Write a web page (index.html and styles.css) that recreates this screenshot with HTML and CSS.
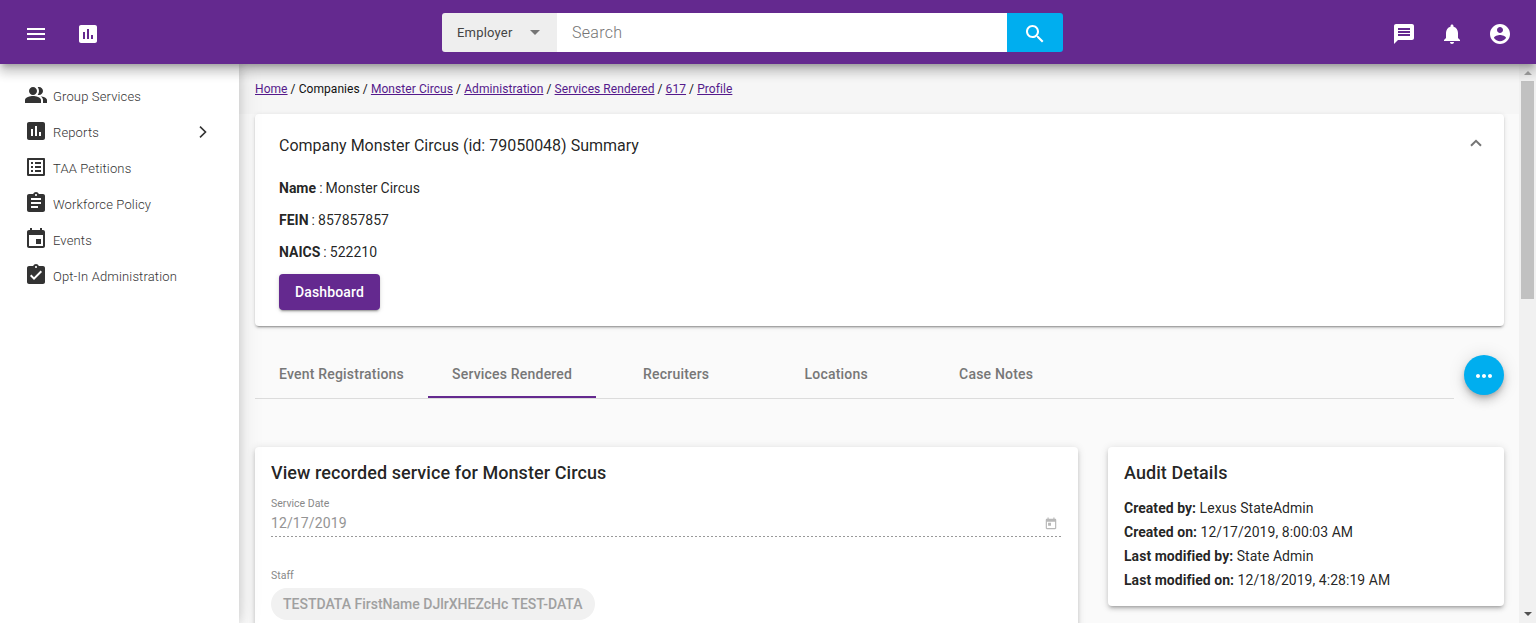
FILE: index.html
```html
<!DOCTYPE html>
<html lang="en">
<head>
<meta charset="utf-8">
<title>Services Rendered</title>
<link rel="stylesheet" href="styles.css">
</head>
<body>
<header class="topbar">
  <div class="topbar-side">
    <svg class="icon" viewBox="0 0 24 24"><path d="M3 18h18v-2H3v2zm0-5h18v-2H3v2zm0-7v2h18V6H3z"/></svg>
    <svg class="icon" viewBox="0 0 24 24"><path d="M19 3H5c-1.100 0-2 .9-2 2v14c0 1.100.9 2 2 2h14c1.100 0 2-.9 2-2V5c0-1.100-.9-2-2-2zM9 17H7v-7h2v7zm4 0h-2V7h2v10zm4 0h-2v-4h2v4z"/></svg>
  </div>
  <div class="search">
    <div class="search-type"><span>Employer</span><i class="caret"></i></div>
    <div class="search-input">Search</div>
    <div class="search-button"><svg class="icon" viewBox="0 0 24 24"><path d="M15.500 14h-.79l-.28-.27C15.410 12.590 16 11.110 16 9.500 16 5.910 13.090 3 9.500 3S3 5.910 3 9.500 5.910 16 9.500 16c1.610 0 3.090-.59 4.230-1.570l.27.28v.79l5 4.990L20.490 19l-4.990-5zm-6 0C7.010 14 5 11.990 5 9.500S7.010 5 9.500 5 14 7.010 14 9.500 11.990 14 9.500 14z"/></svg></div>
  </div>
  <div class="topbar-side topbar-right">
    <svg class="icon" viewBox="0 0 24 24"><path d="M20 2H4c-1.100 0-1.990.9-1.990 2L2 22l4-4h14c1.100 0 2-.9 2-2V4c0-1.100-.9-2-2-2zM6 9h12v2H6V9zm12 5H6v-2h12v2zm0-6H6V6h12v2z"/></svg>
    <svg class="icon" viewBox="0 0 24 24"><path d="M12 22c1.100 0 2-.9 2-2h-4c0 1.100.89 2 2 2zm6-6v-5c0-3.070-1.640-5.640-4.500-6.320V4c0-.83-.67-1.500-1.500-1.500s-1.500.67-1.500 1.500v.68C7.630 5.360 6 7.920 6 11v5l-2 2v1h16v-1l-2-2z"/></svg>
    <svg class="icon" viewBox="0 0 24 24"><path d="M12 2C6.480 2 2 6.480 2 12s4.480 10 10 10 10-4.480 10-10S17.520 2 12 2zm0 3c1.660 0 3 1.340 3 3s-1.340 3-3 3-3-1.340-3-3 1.340-3 3-3zm0 14.200c-2.500 0-4.710-1.280-6-3.220.03-1.990 4-3.080 6-3.080 1.990 0 5.970 1.090 6 3.080-1.290 1.940-3.500 3.220-6 3.220z"/></svg>
  </div>
</header>
<div class="shell">
  <nav class="sidebar">
    <a class="nav-item"><svg class="icon" viewBox="0 0 24 24"><path d="M16.670 13.130C18.040 14.060 19 15.320 19 17v3h4v-3c0-2.180-3.570-3.470-6.330-3.870zM15 12c2.210 0 4-1.790 4-4s-1.790-4-4-4c-.47 0-.91.1-1.330.24C14.500 5.270 15 6.580 15 8s-.5 2.730-1.330 3.760c.42.14.86.24 1.330.24zM9 12c2.210 0 4-1.790 4-4s-1.790-4-4-4-4 1.790-4 4 1.790 4 4 4zm0 1c-2.670 0-8 1.340-8 4v3h16v-3c0-2.660-5.330-4-8-4z"/></svg><span>Group Services</span></a>
    <a class="nav-item"><svg class="icon" viewBox="0 0 24 24"><path d="M19 3H5c-1.100 0-2 .9-2 2v14c0 1.100.9 2 2 2h14c1.100 0 2-.9 2-2V5c0-1.100-.9-2-2-2zM9 17H7v-7h2v7zm4 0h-2V7h2v10zm4 0h-2v-4h2v4z"/></svg><span>Reports</span><svg class="chevron" viewBox="0 0 8 12"><path d="M1 .7 6.500 6 1 11.300"/></svg></a>
    <a class="nav-item"><svg class="icon" viewBox="0 0 24 24"><path d="M19 5v14H5V5h14m1.100-2H3.900c-.5 0-.9.4-.9.9v16.200c0 .4.4.9.9.9h16.200c.4 0 .9-.5.9-.9V3.900c0-.5-.5-.9-.9-.9zM11 7h6v2h-6V7zm0 4h6v2h-6v-2zm0 4h6v2h-6zM7 7h2v2H7zm0 4h2v2H7zm0 4h2v2H7z"/></svg><span>TAA Petitions</span></a>
    <a class="nav-item"><svg class="icon" viewBox="0 0 24 24"><path d="M19 3h-4.180C14.400 1.840 13.300 1 12 1c-1.300 0-2.400.84-2.820 2H5c-1.100 0-2 .9-2 2v14c0 1.100.9 2 2 2h14c1.100 0 2-.9 2-2V5c0-1.100-.9-2-2-2zm-7 0c.55 0 1 .45 1 1s-.45 1-1 1-1-.45-1-1 .45-1 1-1zm2 14H7v-2h7v2zm3-4H7v-2h10v2zm0-4H7V7h10v2z"/></svg><span>Workforce Policy</span></a>
    <a class="nav-item"><svg class="icon" viewBox="0 0 24 24"><path d="M17 12h-5v5h5v-5zM16 1v2H8V1H6v2H5c-1.110 0-1.990.9-1.990 2L3 19c0 1.100.89 2 2 2h14c1.100 0 2-.9 2-2V5c0-1.100-.9-2-2-2h-1V1h-2zm3 18H5V8h14v11z"/></svg><span>Events</span></a>
    <a class="nav-item"><svg class="icon" viewBox="0 0 24 24"><path d="M19 3h-4.180C14.400 1.840 13.300 1 12 1c-1.300 0-2.400.84-2.820 2H5c-1.100 0-2 .9-2 2v14c0 1.100.9 2 2 2h14c1.100 0 2-.9 2-2V5c0-1.100-.9-2-2-2zm-7 0c.55 0 1 .45 1 1s-.45 1-1 1-1-.45-1-1 .45-1 1-1zm-2 14l-4-4 1.410-1.410L10 14.170l6.590-6.590L18 9l-8 8z"/></svg><span>Opt-In Administration</span></a>
  </nav>
  <main class="content">
    <div class="breadcrumb"><a>Home</a> / Companies / <a>Monster Circus</a> / <a>Administration</a> / <a>Services Rendered</a> / <a>617</a> / <a>Profile</a></div>
    <section class="card summary">
      <div class="summary-head"><h1>Company Monster Circus (id: 79050048) Summary</h1><svg class="collapse" viewBox="0 0 12 8"><path d="M1 6.800 6 1.800l5 5"/></svg></div>
      <p><b>Name</b> : Monster Circus</p>
      <p><b>FEIN</b> : 857857857</p>
      <p><b>NAICS</b> : 522210</p>
      <button class="dashboard">Dashboard</button>
    </section>
    <div class="tab-row">
      <div class="tabs">
        <div class="tab">Event Registrations</div>
        <div class="tab active">Services Rendered</div>
        <div class="tab">Recruiters</div>
        <div class="tab">Locations</div>
        <div class="tab">Case Notes</div>
      </div>
      <button class="fab"><svg class="icon" viewBox="0 0 24 24"><path d="M6 10c-1.100 0-2 .9-2 2s.9 2 2 2 2-.9 2-2-.9-2-2-2zm12 0c-1.100 0-2 .9-2 2s.9 2 2 2 2-.9 2-2-.9-2-2-2zm-6 0c-1.100 0-2 .9-2 2s.9 2 2 2 2-.9 2-2-.9-2-2-2z"/></svg></button>
    </div>
    <div class="columns">
      <section class="card record">
        <h2>View recorded service for Monster Circus</h2>
        <div class="label">Service Date</div>
        <div class="date-field"><span>12/17/2019</span><svg class="date-icon" viewBox="0 0 24 24"><path d="M19 3h-1V1h-2v2H8V1H6v2H5c-1.110 0-1.990.9-1.990 2L3 19c0 1.100.89 2 2 2h14c1.100 0 2-.9 2-2V5c0-1.100-.9-2-2-2zm0 16H5V8h14v11zM7 10h5v5H7z"/></svg></div>
        <div class="dots"></div>
        <div class="label staff-label">Staff</div>
        <div class="chip">TESTDATA FirstName DJlrXHEZcHc TEST-DATA</div>
      </section>
      <section class="card audit">
        <h2>Audit Details</h2>
        <div class="audit-line"><b>Created by:</b> Lexus StateAdmin</div>
        <div class="audit-line"><b>Created on:</b> 12/17/2019, 8:00:03 AM</div>
        <div class="audit-line"><b>Last modified by:</b> State Admin</div>
        <div class="audit-line"><b>Last modified on:</b> 12/18/2019, 4:28:19 AM</div>
      </section>
    </div>
  </main>
  <div class="scrollbar"><i class="arrow-up"></i><div class="thumb"></div><i class="arrow-down"></i></div>
</div>
</body>
</html>
```
FILE: styles.css
```css
* { box-sizing: border-box; }
body {
  margin: 0;
  height: 623px;
  overflow: hidden;
  display: flex;
  flex-direction: column;
  font: 14px/20px Roboto, sans-serif;
  color: rgba(0, 0, 0, .87);
  background: #fafafa;
}
h1, h2, p { margin: 0; }
button { border: 0; padding: 0; font-family: inherit; }
.icon { display: block; width: 24px; height: 24px; fill: currentColor; flex: none; }

.topbar {
  position: relative;
  z-index: 3;
  height: 64px;
  flex: none;
  display: flex;
  justify-content: space-between;
  padding: 0 24px;
  background: #64298f;
  color: #fff;
  box-shadow: 0 5px 5px -3px rgba(0,0,0,.2), 0 8px 10px 1px rgba(0,0,0,.14), 0 3px 14px 2px rgba(0,0,0,.12);
}
.topbar-side { width: 418px; display: flex; gap: 28px; padding-top: 22px; }
.topbar-right { justify-content: flex-end; gap: 24px; width: 401px; }
.search { width: 621px; height: 39px; margin-top: 13px; display: flex; border-radius: 3px; overflow: hidden; }
.topbar .search { margin-right: auto; }
.search-type {
  width: 115px;
  display: flex;
  align-items: center;
  justify-content: space-between;
  padding: 0 17px 0 15px;
  background: #eee;
  color: #444;
  font-size: 13px;
  letter-spacing: .2px;
}
.caret { border: 5px solid transparent; border-top-color: #757575; border-bottom: 0; }
.search-input { flex: 1; background: #fff; color: #757575; padding-left: 15px; font-size: 16px; line-height: 39px; font-weight: 300; letter-spacing: .3px; }
.search-button { width: 56px; background: #00aeef; display: flex; align-items: center; justify-content: center; padding-top: 2px; }

.shell { flex: 1; min-height: 0; display: flex; }
.sidebar {
  position: relative;
  z-index: 2;
  width: 239px;
  flex: none;
  padding-top: 14px;
  background: #fff;
  box-shadow: 0 0 10px rgba(0,0,0,.14), 0 0 24px rgba(0,0,0,.12);
  clip-path: inset(0 -40px 0 0);
}
.nav-item { height: 36px; display: flex; align-items: center; padding: 0 32px 0 24px; gap: 5px; color: #333; font-size: 13px; font-weight: 300; letter-spacing: .14px; }
.nav-item .icon { margin-bottom: 2px; }
.nav-item span { padding-top: 1px; }
.chevron { width: 8px; height: 12px; margin-left: auto; fill: none; stroke: #333; stroke-width: 1.6; }

.content { flex: 1; min-width: 0; padding: 0 15px 0 16px; background: linear-gradient(#f6f6f6 50px, #fafafa 50px); overflow: hidden; }
.breadcrumb { height: 50px; padding-top: 15px; font-size: 12px; letter-spacing: .065px; color: #111; white-space: nowrap; }
.breadcrumb a { color: #551a8b; text-decoration: underline; }

.card { background: #fff; border-radius: 4px; }
.summary { height: 212px; padding: 0 22px 0 24px; box-shadow: 0 3px 1px -2px rgba(0,0,0,.2), 0 2px 2px 0 rgba(0,0,0,.14), 0 1px 5px 0 rgba(0,0,0,.12); }
.summary-head { height: 58px; padding-top: 5px; display: flex; align-items: center; justify-content: space-between; }
.summary h1 { font-size: 16px; font-weight: 400; line-height: 25px; }
.collapse { width: 12px; height: 8px; margin-bottom: 5px; fill: none; stroke: #757575; stroke-width: 2; }
.summary p { height: 32px; line-height: 32px; word-spacing: -.4px; }
.dashboard { display: block; margin-top: 6px; width: 101px; height: 36px; border-radius: 4px; background: #64298f; color: #fff; font-size: 14px; font-weight: 500; letter-spacing: .15px; box-shadow: 0 3px 1px -2px rgba(0,0,0,.2), 0 2px 2px 0 rgba(0,0,0,.14), 0 1px 5px 0 rgba(0,0,0,.12); }

.tab-row { display: flex; gap: 10px; margin-top: 24px; }
.tabs { flex: 1; height: 49px; display: flex; border-bottom: 1px solid #dcdcdc; }
.tab { min-width: 160px; padding: 0 24px; height: 48px; line-height: 48px; text-align: center; font-weight: 500; color: #777; letter-spacing: .2px; white-space: nowrap; }
.tab.active { min-width: 167px; border-bottom: 2px solid #64298f; }
.tab:first-child { min-width: 173px; }
.fab { width: 40px; height: 40px; margin-top: 5px; border-radius: 50%; display: flex; align-items: center; justify-content: center; background: #00aeef; color: #fff; box-shadow: 0 3px 5px -1px rgba(0,0,0,.2), 0 6px 10px 0 rgba(0,0,0,.14), 0 1px 18px 0 rgba(0,0,0,.12); padding-top: 1px; }

.columns { display: grid; grid-template-columns: 823px 396px; justify-content: space-between; align-items: start; margin-top: 48px; }
.columns .card { padding: 14px 16px; box-shadow: 0 3px 3px -2px rgba(0,0,0,.2), 0 3px 4px 0 rgba(0,0,0,.14), 0 1px 8px 0 rgba(0,0,0,.12); }
h2 { font-size: 18px; line-height: 24px; font-weight: 500; letter-spacing: .07px; }
.record { height: 260px; }
.label { margin-top: 12px; font-size: 10.500px; line-height: 14px; color: #888; }
.date-field { display: flex; justify-content: space-between; align-items: center; height: 25px; color: #949494; letter-spacing: .12px; }
.date-field span { margin-bottom: 1px; }
.date-icon { width: 14px; height: 14px; margin-right: 4px; fill: #b8b8b8; }
.dots { height: 1px; width: 790px; background: repeating-linear-gradient(90deg, #999 0 2px, transparent 2px 4px); }
.staff-label { margin-top: 32px; }
.chip { width: max-content; margin-top: 5px; height: 32px; line-height: 32px; border-radius: 16px; padding: 0 12px; background: #f1f1f1; color: #a0a0a0; font-weight: 500; }
.columns .audit { height: 159px; }
.audit-line { height: 24px; line-height: 24px; letter-spacing: .04px; }
.audit h2 { margin-bottom: 11px; }

.scrollbar { width: 17px; flex: none; background: #f1f1f1; display: flex; flex-direction: column; align-items: center; padding: 7px 0; }
.thumb { width: 13px; height: 218px; margin-top: 6px; background: #c1c1c1; }
.arrow-up { border: 4px solid transparent; border-bottom-color: #a3a3a3; border-top: 0; }
.arrow-down { margin-top: auto; border: 4px solid transparent; border-top-color: #505050; border-bottom: 0; }
```
